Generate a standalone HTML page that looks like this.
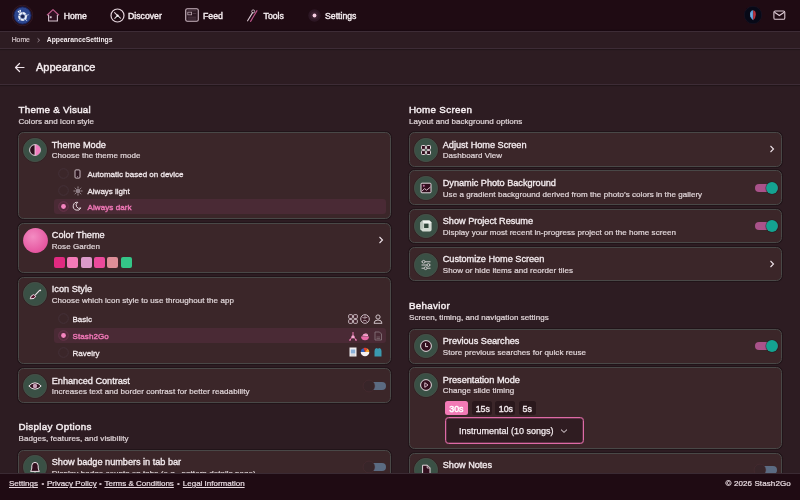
<!DOCTYPE html>
<html><head><meta charset="utf-8"><title>Appearance Settings</title>
<style>
html,body{margin:0;padding:0;width:800px;height:500px;overflow:hidden;background:#2d1c22;}
body{position:relative;font-family:"Liberation Sans",sans-serif;}
#w{position:absolute;left:0;top:0;width:800px;height:500px;will-change:transform;background:#2d1c22;}
.t{position:absolute;white-space:nowrap;}
.b{position:absolute;display:block;}
</style></head><body><div id="w">
<div class="b" style="left:0px;top:0px;width:800px;height:31px;background:#1f0b13"></div>
<div class="b" style="left:0px;top:28.5px;width:800px;height:2px;background:linear-gradient(#1f0b13,#170810)"></div>
<div class="b" style="left:0px;top:30.6px;width:800px;height:1px;background:#3d2c36"></div>
<svg class="b" style="left:12px;top:5px" width="21" height="21" viewBox="0 0 21 21"><circle cx="10.5" cy="10.5" r="10.3" fill="#221019" stroke="#3c1e28" stroke-width="0.7"/><circle cx="10.5" cy="10.5" r="8.6" fill="#2c4790" stroke="#1a2460" stroke-width="0.9"/><circle cx="10.6" cy="11.4" r="4.6" fill="#dfe6f2" opacity="0.35"/><circle cx="10.6" cy="11.4" r="3.4" fill="none" stroke="#eef2fa" stroke-width="1.8" stroke-dasharray="3.2 0.7"/><circle cx="10.6" cy="11.4" r="1.7" fill="#18224e"/><circle cx="6.6" cy="6.6" r="0.9" fill="#eef2fa"/><circle cx="8.2" cy="5.6" r="0.8" fill="#eef2fa"/><path d="M6.8 7 L8.4 8.6 M8.2 5.8 L9 7.8" stroke="#e4eaf6" stroke-width="0.8"/><path d="M14.6 10.4 L16.8 9.6 M13.6 14.2 L15 16 M7.4 14.6 L6.4 15.8" stroke="#dfe6f2" stroke-width="0.7"/></svg>
<svg class="b" style="left:46px;top:8px" width="14" height="14" viewBox="0 0 14 14"><path d="M2.2 6.6 L7 2.2 L11.8 6.6 V13 H2.2 Z" fill="#2e0f20"/><path d="M1 7.2 L7 1.6 L13 7.2" fill="none" stroke="#c05a8c" stroke-width="1.2" stroke-linejoin="round"/><path d="M2.6 6.8 V13 H11.4 V6.8" fill="none" stroke="#d6c4ce" stroke-width="1.1"/><rect x="3.8" y="8.3" width="1.9" height="1.9" fill="#d6c4ce"/></svg>
<div class="t" style="left:63.7px;top:12.34px;font-size:8.7px;line-height:8.7px;font-weight:400;color:#f4ecef;-webkit-text-stroke:0.4px #f4ecef;">Home</div>
<svg class="b" style="left:109.6px;top:7.8px" width="15" height="15" viewBox="0 0 15 15"><circle cx="7.5" cy="7.5" r="6.5" fill="none" stroke="#e4d4dc" stroke-width="1.2"/><path d="M4.6 4.6 L7.6 7.6 M4.8 10.4 L7.6 7.6 L10.4 10.2" stroke="#e4d4dc" stroke-width="1.1" stroke-linecap="round"/><circle cx="7.6" cy="7.6" r="1.1" fill="#fff"/></svg>
<div class="t" style="left:128px;top:12.34px;font-size:8.7px;line-height:8.7px;font-weight:400;color:#f4ecef;-webkit-text-stroke:0.4px #f4ecef;">Discover</div>
<svg class="b" style="left:185px;top:8.1px" width="14" height="14" viewBox="0 0 14 14"><rect x="0.7" y="0.7" width="12.6" height="12.6" rx="1.6" fill="#2c1722" stroke="#cbb7c1" stroke-width="1.1"/><rect x="2.8" y="4.2" width="3.8" height="2.6" fill="none" stroke="#b8a4ae" stroke-width="0.8"/><path d="M2.8 2.8 H11.2 M7.6 5.5 H11.2 M2.8 9.2 H11.2 M2.8 11 H11.2" stroke="#5a4450" stroke-width="0.7"/></svg>
<div class="t" style="left:203px;top:12.34px;font-size:8.7px;line-height:8.7px;font-weight:400;color:#f4ecef;-webkit-text-stroke:0.4px #f4ecef;">Feed</div>
<svg class="b" style="left:246px;top:8px" width="14" height="15" viewBox="0 0 14 15"><path d="M1.6 12.8 L6.6 4.6" stroke="#dccad4" stroke-width="1.1" stroke-linecap="round"/><circle cx="7.2" cy="3.4" r="1.5" fill="none" stroke="#cdbcc5" stroke-width="0.9"/><path d="M4.6 13.4 L11 2.6" stroke="#c2568c" stroke-width="1.1" stroke-linecap="round"/></svg>
<div class="t" style="left:263.6px;top:12.34px;font-size:8.7px;line-height:8.7px;font-weight:400;color:#f4ecef;-webkit-text-stroke:0.4px #f4ecef;">Tools</div>
<svg class="b" style="left:306.5px;top:7.9px" width="15" height="15" viewBox="0 0 15 15"><circle cx="7.5" cy="7.5" r="6.2" fill="#301a28" opacity="0.85"/><circle cx="7.5" cy="7.5" r="4" fill="#3a2030"/><circle cx="7.5" cy="7.5" r="1.9" fill="#f6cde2"/></svg>
<div class="t" style="left:325px;top:12.34px;font-size:8.7px;line-height:8.7px;font-weight:400;color:#f4ecef;-webkit-text-stroke:0.4px #f4ecef;">Settings</div>
<svg class="b" style="left:744px;top:6px" width="18" height="18" viewBox="0 0 18 18"><circle cx="9" cy="9" r="8.7" fill="#070917" stroke="#1c1a2a" stroke-width="0.5"/><path d="M9.2 4.2 Q6 4.4 6 8.6 Q6.2 12.4 9.2 14.2 Z" fill="#5a9ad2"/><path d="M9.2 4.2 Q12 4.6 11.8 8.8 Q11.6 12.6 9.2 14.2 Z" fill="#b8303c"/><path d="M7 6.5 Q7.5 9 7 11" stroke="#9ccaf0" stroke-width="0.6" fill="none"/></svg>
<svg class="b" style="left:773.4px;top:10.4px" width="13" height="10" viewBox="0 0 13 10"><rect x="0.9" y="0.9" width="10.9" height="8.4" rx="1.4" fill="none" stroke="#e2cfd9" stroke-width="1.05"/><path d="M1.5 2.3 L6.35 5.5 L11.2 2.3" fill="none" stroke="#e2cfd9" stroke-width="1.05"/></svg>
<div class="b" style="left:0px;top:31.6px;width:800px;height:16.5px;background:#2d1c22"></div>
<div class="b" style="left:0px;top:48px;width:800px;height:1px;background:#3d2c36;box-shadow:0 1px 1px rgba(0,0,0,0.3)"></div>
<div class="t" style="left:11.7px;top:37.24px;font-size:6.8px;line-height:6.8px;font-weight:400;color:#d3c5ca;-webkit-text-stroke:0.2px #d3c5ca;">Home</div>
<svg class="b" style="left:35.5px;top:37px" width="5" height="6" viewBox="0 0 5 6"><path d="M1.6 1.4 L3.6 3.2 L1.6 5" fill="none" stroke="#a696a0" stroke-width="0.9"/></svg>
<div class="t" style="left:46.8px;top:37.24px;font-size:6.8px;line-height:6.8px;font-weight:700;color:#f4ecef;">AppearanceSettings</div>
<div class="b" style="left:0px;top:84px;width:800px;height:1px;background:#3d2c36;box-shadow:0 1px 1px rgba(0,0,0,0.3)"></div>
<svg class="b" style="left:14px;top:62px" width="11" height="11" viewBox="0 0 11 11"><path d="M10 5.5 H1.5 M5.5 1.5 L1.5 5.5 L5.5 9.5" fill="none" stroke="#f0e4ea" stroke-width="1.2" stroke-linecap="round" stroke-linejoin="round"/></svg>
<div class="t" style="left:36px;top:62.19px;font-size:11px;line-height:11px;font-weight:400;color:#f4ecef;-webkit-text-stroke:0.4px #f4ecef;">Appearance</div>
<div class="t" style="left:18.5px;top:104.60px;font-size:9.8px;line-height:9.8px;font-weight:400;color:#f4ecef;-webkit-text-stroke:0.45px #f4ecef;letter-spacing:0.25px">Theme &amp; Visual</div>
<div class="t" style="left:18.5px;top:118.23px;font-size:8px;line-height:8px;font-weight:400;color:#e0d5d8;-webkit-text-stroke:0.2px #e0d5d8;letter-spacing:0.06px">Colors and icon style</div>
<div class="b" style="left:17.75px;top:132px;width:373.25px;height:87px;background:#3b2629;border:1px solid #494847;border-radius:5.5px;box-sizing:border-box;box-shadow:0 0 0.5px 1px rgba(22,12,15,0.5)"></div>
<svg class="b" style="left:21.75px;top:136.75px" width="26" height="26" viewBox="0 0 26 26"><g transform="translate(1 1)"><circle cx="12.0" cy="12.0" r="12.3" fill="none" stroke="rgba(22,18,18,0.45)" stroke-width="0.8"/><circle cx="12.0" cy="12.0" r="11.7" fill="#3a5045" stroke="#4a534b" stroke-width="0.7"/><circle cx="12" cy="12" r="5.4" fill="#2a0f1c" stroke="#ece0e6" stroke-width="0.9"/><path d="M12 6.6 A5.4 5.4 0 0 1 12 17.4 Z" fill="#f07ec0"/><path d="M12 6.6 V17.4" stroke="#ece0e6" stroke-width="0.8"/></g></svg>
<div class="t" style="left:51.75px;top:140.61px;font-size:9.2px;line-height:9.2px;font-weight:400;color:#f4ecef;-webkit-text-stroke:0.32px #f4ecef;">Theme Mode</div>
<div class="t" style="left:51.75px;top:152.33px;font-size:8px;line-height:8px;font-weight:400;color:#e0d5d8;-webkit-text-stroke:0.2px #e0d5d8;letter-spacing:0.06px">Choose the theme mode</div>
<div class="b" style="left:53.75px;top:198.75px;width:332px;height:15.5px;background:#4a2a35;border-radius:3px"></div>
<svg class="b" style="left:58.0px;top:168.1px" width="11" height="11" viewBox="0 0 11 11"><circle cx="5.5" cy="5.5" r="4.8" fill="none" stroke="#45323a" stroke-width="0.9"/></svg>
<svg class="b" style="left:58.0px;top:184.8px" width="11" height="11" viewBox="0 0 11 11"><circle cx="5.5" cy="5.5" r="4.8" fill="none" stroke="#45323a" stroke-width="0.9"/></svg>
<svg class="b" style="left:58.0px;top:200.7px" width="11" height="11" viewBox="0 0 11 11"><circle cx="5.5" cy="5.5" r="4.8" fill="#52283a" stroke="#6e3a52" stroke-width="0.8"/><circle cx="5.5" cy="5.5" r="2.4" fill="#f584c0"/></svg>
<svg class="b" style="left:74px;top:168.5px" width="7" height="10" viewBox="0 0 7 10"><rect x="1" y="0.9" width="5" height="8.2" rx="1" fill="#2e1620" stroke="#d8c8d0" stroke-width="0.9"/><path d="M3 7.6 H4" stroke="#d8c8d0" stroke-width="0.6"/></svg>
<div class="t" style="left:87.5px;top:171.03px;font-size:8px;line-height:8px;font-weight:400;color:#efe6e9;-webkit-text-stroke:0.3px #efe6e9;">Automatic based on device</div>
<svg class="b" style="left:72.5px;top:185.5px" width="10" height="10" viewBox="0 0 10 10"><circle cx="5" cy="5" r="2.1" fill="#8c7c84" stroke="#a8989f" stroke-width="0.6"/><path d="M5 0.5V2 M5 8V9.5 M0.5 5H2 M8 5H9.5 M1.8 1.8L2.8 2.8 M7.2 7.2L8.2 8.2 M1.8 8.2L2.8 7.2 M7.2 2.8L8.2 1.8" stroke="#b8a8b0" stroke-width="0.8"/></svg>
<div class="t" style="left:87.5px;top:187.78px;font-size:8px;line-height:8px;font-weight:400;color:#efe6e9;-webkit-text-stroke:0.3px #efe6e9;">Always light</div>
<svg class="b" style="left:72.3px;top:201.2px" width="10" height="10" viewBox="0 0 10 10"><path d="M5.8 1.3 A4 4 0 1 0 8.9 6.9 A3.2 3.2 0 0 1 5.8 1.3 Z" fill="none" stroke="#ece2e6" stroke-width="0.95"/></svg>
<div class="t" style="left:87.5px;top:203.53px;font-size:8px;line-height:8px;font-weight:400;color:#ea74b2;-webkit-text-stroke:0.45px #ea74b2;letter-spacing:0.1px">Always dark</div>
<div class="b" style="left:17.75px;top:222.5px;width:373.25px;height:50.5px;background:#3b2629;border:1px solid #494847;border-radius:5.5px;box-sizing:border-box;box-shadow:0 0 0.5px 1px rgba(22,12,15,0.5)"></div>
<svg class="b" style="left:22.5px;top:227.5px" width="25" height="25" viewBox="0 0 25 25"><defs><radialGradient id="gp" cx="0.4" cy="0.35" r="0.7"><stop offset="0" stop-color="#f38cc2"/><stop offset="1" stop-color="#e4509c"/></radialGradient></defs><circle cx="12.5" cy="12.5" r="12.4" fill="url(#gp)"/></svg>
<div class="t" style="left:51.75px;top:230.76px;font-size:9.2px;line-height:9.2px;font-weight:400;color:#f4ecef;-webkit-text-stroke:0.32px #f4ecef;">Color Theme</div>
<div class="t" style="left:51.75px;top:242.78px;font-size:8px;line-height:8px;font-weight:400;color:#e0d5d8;-webkit-text-stroke:0.2px #e0d5d8;letter-spacing:0.06px">Rose Garden</div>
<div class="b" style="left:54.0px;top:256.5px;width:11px;height:11px;background:#e02a80;border-radius:2px"></div>
<div class="b" style="left:67.3px;top:256.5px;width:11px;height:11px;background:#f47ab8;border-radius:2px"></div>
<div class="b" style="left:80.6px;top:256.5px;width:11px;height:11px;background:#dc9bca;border-radius:2px"></div>
<div class="b" style="left:93.9px;top:256.5px;width:11px;height:11px;background:#ec4a9c;border-radius:2px"></div>
<div class="b" style="left:107.2px;top:256.5px;width:11px;height:11px;background:#de8e98;border-radius:2px"></div>
<div class="b" style="left:120.5px;top:256.5px;width:11px;height:11px;background:#34c587;border-radius:2px"></div>
<svg class="b" style="left:378px;top:236px" width="6" height="8" viewBox="0 0 6 8"><path d="M1.5 1 L4.5 4 L1.5 7" fill="none" stroke="#eee2e8" stroke-width="1.1"/></svg>
<div class="b" style="left:17.75px;top:276.5px;width:373.25px;height:87.5px;background:#3b2629;border:1px solid #494847;border-radius:5.5px;box-sizing:border-box;box-shadow:0 0 0.5px 1px rgba(22,12,15,0.5)"></div>
<svg class="b" style="left:21.75px;top:281.25px" width="26" height="26" viewBox="0 0 26 26"><g transform="translate(1 1)"><circle cx="12.0" cy="12.0" r="12.3" fill="none" stroke="rgba(22,18,18,0.45)" stroke-width="0.8"/><circle cx="12.0" cy="12.0" r="11.7" fill="#3a5045" stroke="#4a534b" stroke-width="0.7"/><path d="M12.6 12.6 L16.6 8.4 Q17.4 7.6 17.6 8.6" fill="none" stroke="#ece0e6" stroke-width="1.1" stroke-linecap="round"/><path d="M7.2 16.8 Q7.6 13.2 10.6 12.6 L12.8 14.2 Q12 17.4 7.2 16.8 Z" fill="#5a1530" stroke="#ece0e6" stroke-width="1"/></g></svg>
<div class="t" style="left:51.75px;top:285.01px;font-size:9.2px;line-height:9.2px;font-weight:400;color:#f4ecef;-webkit-text-stroke:0.32px #f4ecef;">Icon Style</div>
<div class="t" style="left:51.75px;top:296.53px;font-size:8px;line-height:8px;font-weight:400;color:#e0d5d8;-webkit-text-stroke:0.2px #e0d5d8;letter-spacing:0.06px">Choose which icon style to use throughout the app</div>
<div class="b" style="left:53.75px;top:328px;width:332px;height:14.75px;background:#4a2a35;border-radius:3px"></div>
<svg class="b" style="left:58.0px;top:312.9px" width="11" height="11" viewBox="0 0 11 11"><circle cx="5.5" cy="5.5" r="4.8" fill="none" stroke="#45323a" stroke-width="0.9"/></svg>
<svg class="b" style="left:58.0px;top:329.7px" width="11" height="11" viewBox="0 0 11 11"><circle cx="5.5" cy="5.5" r="4.8" fill="#52283a" stroke="#6e3a52" stroke-width="0.8"/><circle cx="5.5" cy="5.5" r="2.4" fill="#f584c0"/></svg>
<svg class="b" style="left:58.0px;top:346.7px" width="11" height="11" viewBox="0 0 11 11"><circle cx="5.5" cy="5.5" r="4.8" fill="none" stroke="#45323a" stroke-width="0.9"/></svg>
<div class="t" style="left:72.5px;top:315.78px;font-size:8px;line-height:8px;font-weight:400;color:#efe6e9;-webkit-text-stroke:0.3px #efe6e9;">Basic</div>
<div class="t" style="left:72.5px;top:332.53px;font-size:8px;line-height:8px;font-weight:400;color:#ea74b2;-webkit-text-stroke:0.45px #ea74b2;letter-spacing:0.1px">Stash2Go</div>
<div class="t" style="left:72.5px;top:349.53px;font-size:8px;line-height:8px;font-weight:400;color:#efe6e9;-webkit-text-stroke:0.3px #efe6e9;">Ravelry</div>
<svg class="b" style="left:347.5px;top:314px" width="10" height="10" viewBox="0 0 10 10"><rect x="0.7" y="0.7" width="3.7" height="3.7" rx="0.7" fill="#3a1a24" stroke="#e0d2d8" stroke-width="0.9"/><rect x="5.6" y="0.7" width="3.7" height="3.7" rx="0.7" fill="#3a1a24" stroke="#e0d2d8" stroke-width="0.9"/><rect x="0.7" y="5.6" width="3.7" height="3.7" rx="0.7" fill="#3a1a24" stroke="#e0d2d8" stroke-width="0.9"/><rect x="5.6" y="5.6" width="3.7" height="3.7" rx="0.7" fill="#3a1a24" stroke="#e0d2d8" stroke-width="0.9"/></svg>
<svg class="b" style="left:360px;top:314px" width="10" height="10" viewBox="0 0 10 10"><circle cx="5" cy="5" r="4.3" fill="#3a1a24" stroke="#e0d2d8" stroke-width="0.9"/><path d="M2.5 3.5 Q5 5 7.5 3 M3 7 Q5 5 7 7.5 M5 1.5 V4" fill="none" stroke="#e0d2d8" stroke-width="0.7"/></svg>
<svg class="b" style="left:372.5px;top:314px" width="10" height="10" viewBox="0 0 10 10"><circle cx="5" cy="3" r="2.1" fill="none" stroke="#e0d2d8" stroke-width="0.9"/><path d="M1 9.3 Q1 6 5 6 Q9 6 9 9.3 Z" fill="none" stroke="#e0d2d8" stroke-width="0.9"/></svg>
<svg class="b" style="left:347.5px;top:330.5px" width="10" height="10" viewBox="0 0 10 10"><path d="M5 1 V4 M2 9.2 L5 4.5 L8 9.2 M1 9 H3 M7 9 H9" stroke="#f07ab6" stroke-width="1" fill="none"/><circle cx="5" cy="5.8" r="1.6" fill="#f5a8d0"/></svg>
<svg class="b" style="left:360px;top:330.5px" width="10" height="10" viewBox="0 0 10 10"><path d="M1 5.5 H9 Q9 9.2 5 9.2 Q1 9.2 1 5.5 Z" fill="#e86aa8"/><path d="M2.2 5.2 Q3 2 6 2.5 Q8.5 3 8 5.2 Z" fill="#f6b6d6"/><path d="M3 4.5 L7 3.5" stroke="#e0509a" stroke-width="0.6"/></svg>
<svg class="b" style="left:372.5px;top:330.5px" width="10" height="10" viewBox="0 0 10 10"><path d="M2 1 H6.5 L8.5 3 V9 H2 Z" fill="none" stroke="#8a7a80" stroke-width="0.8"/><path d="M3.5 6 H7 M3.5 7.5 H7" stroke="#8a7a80" stroke-width="0.6"/></svg>
<svg class="b" style="left:347.5px;top:347px" width="10" height="10" viewBox="0 0 10 10"><rect x="1.5" y="0.5" width="7" height="9" fill="#f0eef2"/><rect x="2.8" y="2.5" width="4.4" height="4" fill="#8ab0d8"/><path d="M2.8 8 H7" stroke="#999" stroke-width="0.5"/></svg>
<svg class="b" style="left:360px;top:347px" width="10" height="10" viewBox="0 0 10 10"><path d="M0.7 5 H9.3 A4.3 4.3 0 0 1 0.7 5 Z" fill="#f4f0f2"/><path d="M0.7 5 A4.3 4.3 0 0 1 3.5 1 L5 5 Z" fill="#3060c0"/><path d="M3.5 1 A4.3 4.3 0 0 1 7.5 1.5 L5 5 Z" fill="#e04030"/><path d="M7.5 1.5 A4.3 4.3 0 0 1 9.3 5 H5 Z" fill="#f0a030"/></svg>
<svg class="b" style="left:372.5px;top:347px" width="10" height="10" viewBox="0 0 10 10"><path d="M1.5 9.5 V4 Q1.5 1.5 3.5 1 Q5 2 6.5 1 Q8.5 1.5 8.5 4 V9.5 Z" fill="#3a9ab0"/></svg>
<div class="b" style="left:17.75px;top:368px;width:373.25px;height:35px;background:#3b2629;border:1px solid #494847;border-radius:5.5px;box-sizing:border-box;box-shadow:0 0 0.5px 1px rgba(22,12,15,0.5)"></div>
<svg class="b" style="left:21.75px;top:372.75px" width="26" height="26" viewBox="0 0 26 26"><g transform="translate(1 1)"><circle cx="12.0" cy="12.0" r="12.3" fill="none" stroke="rgba(22,18,18,0.45)" stroke-width="0.8"/><circle cx="12.0" cy="12.0" r="11.7" fill="#3a5045" stroke="#4a534b" stroke-width="0.7"/><path d="M5.8 12 Q12 5.6 18.2 12 Q12 18.4 5.8 12 Z" fill="#320f1e" stroke="#ece0e6" stroke-width="1"/><circle cx="12" cy="12" r="2.2" fill="#c8a0b8"/></g></svg>
<div class="t" style="left:51.75px;top:376.71px;font-size:9.2px;line-height:9.2px;font-weight:400;color:#f4ecef;-webkit-text-stroke:0.32px #f4ecef;letter-spacing:-0.03px">Enhanced Contrast</div>
<div class="t" style="left:51.75px;top:388.33px;font-size:8px;line-height:8px;font-weight:400;color:#e0d5d8;-webkit-text-stroke:0.2px #e0d5d8;letter-spacing:0.06px">Increases text and border contrast for better readability</div>
<div class="b" style="left:363.75px;top:381.5px;width:22.5px;height:8px;background:#5b6b82;border-radius:4px"></div>
<svg class="b" style="left:362.25px;top:378.5px" width="14" height="14" viewBox="0 0 14 14"><circle cx="7" cy="7" r="5.9" fill="#382529" stroke="rgba(95,52,62,0.45)" stroke-width="0.6"/></svg>
<div class="t" style="left:18.5px;top:422.45px;font-size:9.8px;line-height:9.8px;font-weight:400;color:#f4ecef;-webkit-text-stroke:0.45px #f4ecef;letter-spacing:0.3px">Display Options</div>
<div class="t" style="left:18.5px;top:435.28px;font-size:8px;line-height:8px;font-weight:400;color:#e0d5d8;-webkit-text-stroke:0.2px #e0d5d8;letter-spacing:0.06px">Badges, features, and visibility</div>
<div class="b" style="left:17.75px;top:450px;width:373.25px;height:45px;background:#3b2629;border:1px solid #494847;border-radius:5.5px;box-sizing:border-box;box-shadow:0 0 0.5px 1px rgba(22,12,15,0.5)"></div>
<svg class="b" style="left:21.75px;top:454.25px" width="26" height="26" viewBox="0 0 26 26"><g transform="translate(1 1)"><circle cx="12.0" cy="12.0" r="12.3" fill="none" stroke="rgba(22,18,18,0.45)" stroke-width="0.8"/><circle cx="12.0" cy="12.0" r="11.7" fill="#3a5045" stroke="#4a534b" stroke-width="0.7"/><path d="M7.6 16.4 Q8.6 15 8.8 13 V10.8 Q8.8 7.4 12 7.4 Q15.2 7.4 15.2 10.8 V13 Q15.4 15 16.4 16.4 Z" fill="#320f1e" stroke="#ece0e6" stroke-width="1"/><path d="M11 18.2 H13" stroke="#ece0e6" stroke-width="1.1"/></g></svg>
<div class="t" style="left:51.75px;top:458.21px;font-size:9.2px;line-height:9.2px;font-weight:400;color:#f4ecef;-webkit-text-stroke:0.32px #f4ecef;letter-spacing:-0.03px">Show badge numbers in tab bar</div>
<div class="t" style="left:51.75px;top:469.83px;font-size:8px;line-height:8px;font-weight:400;color:#e0d5d8;-webkit-text-stroke:0.2px #e0d5d8;letter-spacing:0.06px">Display badge counts on tabs (e.g., pattern details page)</div>
<div class="b" style="left:363.75px;top:463px;width:22.5px;height:8px;background:#5b6b82;border-radius:4px"></div>
<svg class="b" style="left:362.25px;top:460px" width="14" height="14" viewBox="0 0 14 14"><circle cx="7" cy="7" r="5.9" fill="#382529" stroke="rgba(95,52,62,0.45)" stroke-width="0.6"/></svg>
<div class="t" style="left:409px;top:104.60px;font-size:9.8px;line-height:9.8px;font-weight:400;color:#f4ecef;-webkit-text-stroke:0.45px #f4ecef;letter-spacing:0.3px">Home Screen</div>
<div class="t" style="left:409px;top:118.28px;font-size:8px;line-height:8px;font-weight:400;color:#e0d5d8;-webkit-text-stroke:0.2px #e0d5d8;letter-spacing:0.06px">Layout and background options</div>
<div class="b" style="left:408.75px;top:132px;width:373.25px;height:35px;background:#3b2629;border:1px solid #494847;border-radius:5.5px;box-sizing:border-box;box-shadow:0 0 0.5px 1px rgba(22,12,15,0.5)"></div>
<svg class="b" style="left:412.75px;top:136.75px" width="26" height="26" viewBox="0 0 26 26"><g transform="translate(1 1)"><circle cx="12.0" cy="12.0" r="12.3" fill="none" stroke="rgba(22,18,18,0.45)" stroke-width="0.8"/><circle cx="12.0" cy="12.0" r="11.7" fill="#3a5045" stroke="#4a534b" stroke-width="0.7"/><rect x="7.5" y="7.5" width="3.9" height="3.9" rx="0.8" fill="#320f1e" stroke="#ece0e6" stroke-width="0.95"/><rect x="12.6" y="7.5" width="3.9" height="3.9" rx="0.8" fill="#320f1e" stroke="#ece0e6" stroke-width="0.95"/><rect x="7.5" y="12.6" width="3.9" height="3.9" rx="0.8" fill="#320f1e" stroke="#ece0e6" stroke-width="0.95"/><rect x="12.6" y="12.6" width="3.9" height="3.9" rx="0.8" fill="#320f1e" stroke="#ece0e6" stroke-width="0.95"/></g></svg>
<div class="t" style="left:442.75px;top:140.71px;font-size:9.2px;line-height:9.2px;font-weight:400;color:#f4ecef;-webkit-text-stroke:0.32px #f4ecef;letter-spacing:-0.03px">Adjust Home Screen</div>
<div class="t" style="left:442.75px;top:152.33px;font-size:8px;line-height:8px;font-weight:400;color:#e0d5d8;-webkit-text-stroke:0.2px #e0d5d8;letter-spacing:0.06px">Dashboard View</div>
<svg class="b" style="left:769.05px;top:145.0px" width="6" height="8" viewBox="0 0 6 8"><path d="M1.5 1 L4.5 4 L1.5 7" fill="none" stroke="#eee2e8" stroke-width="1.1"/></svg>
<div class="b" style="left:408.75px;top:170px;width:373.25px;height:35px;background:#3b2629;border:1px solid #494847;border-radius:5.5px;box-sizing:border-box;box-shadow:0 0 0.5px 1px rgba(22,12,15,0.5)"></div>
<svg class="b" style="left:412.75px;top:175.0px" width="26" height="26" viewBox="0 0 26 26"><g transform="translate(1 1)"><circle cx="12.0" cy="12.0" r="12.3" fill="none" stroke="rgba(22,18,18,0.45)" stroke-width="0.8"/><circle cx="12.0" cy="12.0" r="11.7" fill="#3a5045" stroke="#4a534b" stroke-width="0.7"/><rect x="7" y="7.2" width="10" height="9.6" rx="1" fill="#320f1e" stroke="#ece0e6" stroke-width="0.95"/><path d="M7.5 15.6 L10.5 12.6 L12.6 14.2 L16.5 11" fill="none" stroke="#e8c8d8" stroke-width="0.9"/><circle cx="9.8" cy="9.8" r="1" fill="#c070a0"/></g></svg>
<div class="t" style="left:442.75px;top:178.96px;font-size:9.2px;line-height:9.2px;font-weight:400;color:#f4ecef;-webkit-text-stroke:0.32px #f4ecef;letter-spacing:-0.03px">Dynamic Photo Background</div>
<div class="t" style="left:442.75px;top:190.58px;font-size:8px;line-height:8px;font-weight:400;color:#e0d5d8;-webkit-text-stroke:0.2px #e0d5d8;letter-spacing:0.06px">Use a gradient background derived from the photo&#8217;s colors in the gallery</div>
<div class="b" style="left:755.0px;top:183.75px;width:22.5px;height:8px;background:#a9528a;border-radius:4px"></div>
<svg class="b" style="left:764.5px;top:180.75px" width="14" height="14" viewBox="0 0 14 14"><circle cx="7" cy="7" r="6.6" fill="#1b1416" opacity="0.55"/><circle cx="7" cy="7" r="5.9" fill="#14a391"/></svg>
<div class="b" style="left:408.75px;top:208.5px;width:373.25px;height:34.5px;background:#3b2629;border:1px solid #494847;border-radius:5.5px;box-sizing:border-box;box-shadow:0 0 0.5px 1px rgba(22,12,15,0.5)"></div>
<svg class="b" style="left:412.75px;top:213.25px" width="26" height="26" viewBox="0 0 26 26"><g transform="translate(1 1)"><circle cx="12.0" cy="12.0" r="12.3" fill="none" stroke="rgba(22,18,18,0.45)" stroke-width="0.8"/><circle cx="12.0" cy="12.0" r="11.7" fill="#3a5045" stroke="#4a534b" stroke-width="0.7"/><path d="M8.6 6.4 H15.4 L17.6 8.6 V15.6 Q17.6 17.6 15.6 17.6 H8.6 L6.4 15.4 V8.6 Z" fill="#d3dbd3"/><path d="M8.6 6.4 H15.4 L17.6 8.6 L15 10 H9.6 Z" fill="#eef2ee"/><path d="M6.4 8.6 L8.6 6.4 L9.6 10 L9 14.5 L6.4 15.4 Z" fill="#b9c4bb"/><rect x="10.1" y="9.6" width="4.4" height="4.4" fill="#2f463a"/></g></svg>
<div class="t" style="left:442.75px;top:217.21px;font-size:9.2px;line-height:9.2px;font-weight:400;color:#f4ecef;-webkit-text-stroke:0.32px #f4ecef;letter-spacing:-0.03px">Show Project Resume</div>
<div class="t" style="left:442.75px;top:228.83px;font-size:8px;line-height:8px;font-weight:400;color:#e0d5d8;-webkit-text-stroke:0.2px #e0d5d8;letter-spacing:0.06px">Display your most recent in-progress project on the home screen</div>
<div class="b" style="left:755.0px;top:222px;width:22.5px;height:8px;background:#a9528a;border-radius:4px"></div>
<svg class="b" style="left:764.5px;top:219px" width="14" height="14" viewBox="0 0 14 14"><circle cx="7" cy="7" r="6.6" fill="#1b1416" opacity="0.55"/><circle cx="7" cy="7" r="5.9" fill="#14a391"/></svg>
<div class="b" style="left:408.75px;top:246.5px;width:373.25px;height:34.5px;background:#3b2629;border:1px solid #494847;border-radius:5.5px;box-sizing:border-box;box-shadow:0 0 0.5px 1px rgba(22,12,15,0.5)"></div>
<svg class="b" style="left:412.75px;top:251.5px" width="26" height="26" viewBox="0 0 26 26"><g transform="translate(1 1)"><circle cx="12.0" cy="12.0" r="12.3" fill="none" stroke="rgba(22,18,18,0.45)" stroke-width="0.8"/><circle cx="12.0" cy="12.0" r="11.7" fill="#3a5045" stroke="#4a534b" stroke-width="0.7"/><path d="M7.5 8.8 H16.5 M7.5 12 H16.5 M7.5 15.2 H16.5" stroke="#e0d8dc" stroke-width="0.9"/><circle cx="9.6" cy="8.8" r="1.4" fill="#3a5045" stroke="#e0d8dc" stroke-width="0.8"/><circle cx="14.4" cy="12" r="1.4" fill="#3a5045" stroke="#e0d8dc" stroke-width="0.8"/><circle cx="11.6" cy="15.2" r="1.4" fill="#3a5045" stroke="#e0d8dc" stroke-width="0.8"/></g></svg>
<div class="t" style="left:442.75px;top:255.46px;font-size:9.2px;line-height:9.2px;font-weight:400;color:#f4ecef;-webkit-text-stroke:0.32px #f4ecef;letter-spacing:-0.03px">Customize Home Screen</div>
<div class="t" style="left:442.75px;top:267.08px;font-size:8px;line-height:8px;font-weight:400;color:#e0d5d8;-webkit-text-stroke:0.2px #e0d5d8;letter-spacing:0.06px">Show or hide items and reorder tiles</div>
<svg class="b" style="left:769.05px;top:259.75px" width="6" height="8" viewBox="0 0 6 8"><path d="M1.5 1 L4.5 4 L1.5 7" fill="none" stroke="#eee2e8" stroke-width="1.1"/></svg>
<div class="t" style="left:409px;top:300.60px;font-size:9.8px;line-height:9.8px;font-weight:400;color:#f4ecef;-webkit-text-stroke:0.45px #f4ecef;letter-spacing:0.3px">Behavior</div>
<div class="t" style="left:409px;top:313.53px;font-size:8px;line-height:8px;font-weight:400;color:#e0d5d8;-webkit-text-stroke:0.2px #e0d5d8;letter-spacing:0.06px">Screen, timing, and navigation settings</div>
<div class="b" style="left:408.75px;top:328.5px;width:373.25px;height:35px;background:#3b2629;border:1px solid #494847;border-radius:5.5px;box-sizing:border-box;box-shadow:0 0 0.5px 1px rgba(22,12,15,0.5)"></div>
<svg class="b" style="left:412.75px;top:333.25px" width="26" height="26" viewBox="0 0 26 26"><g transform="translate(1 1)"><circle cx="12.0" cy="12.0" r="12.3" fill="none" stroke="rgba(22,18,18,0.45)" stroke-width="0.8"/><circle cx="12.0" cy="12.0" r="11.7" fill="#3a5045" stroke="#4a534b" stroke-width="0.7"/><circle cx="12" cy="12" r="5.4" fill="#320f1e" stroke="#ece0e6" stroke-width="0.95"/><path d="M11.6 9 V12.6 H14" fill="none" stroke="#ece0e6" stroke-width="0.95"/></g></svg>
<div class="t" style="left:442.75px;top:337.21px;font-size:9.2px;line-height:9.2px;font-weight:400;color:#f4ecef;-webkit-text-stroke:0.32px #f4ecef;letter-spacing:-0.03px">Previous Searches</div>
<div class="t" style="left:442.75px;top:348.83px;font-size:8px;line-height:8px;font-weight:400;color:#e0d5d8;-webkit-text-stroke:0.2px #e0d5d8;letter-spacing:0.06px">Store previous searches for quick reuse</div>
<div class="b" style="left:755.0px;top:342px;width:22.5px;height:8px;background:#a9528a;border-radius:4px"></div>
<svg class="b" style="left:764.5px;top:339px" width="14" height="14" viewBox="0 0 14 14"><circle cx="7" cy="7" r="6.6" fill="#1b1416" opacity="0.55"/><circle cx="7" cy="7" r="5.9" fill="#14a391"/></svg>
<div class="b" style="left:408.75px;top:366.5px;width:373.25px;height:82.5px;background:#3b2629;border:1px solid #494847;border-radius:5.5px;box-sizing:border-box;box-shadow:0 0 0.5px 1px rgba(22,12,15,0.5)"></div>
<svg class="b" style="left:412.75px;top:371.5px" width="26" height="26" viewBox="0 0 26 26"><g transform="translate(1 1)"><circle cx="12.0" cy="12.0" r="12.3" fill="none" stroke="rgba(22,18,18,0.45)" stroke-width="0.8"/><circle cx="12.0" cy="12.0" r="11.7" fill="#3a5045" stroke="#4a534b" stroke-width="0.7"/><circle cx="12" cy="12" r="5.4" fill="#320f1e" stroke="#ece0e6" stroke-width="0.95"/><path d="M10.8 9.7 L14 12 L10.8 14.3 Z" fill="none" stroke="#e8c8d8" stroke-width="0.9"/></g></svg>
<div class="t" style="left:442.75px;top:375.51px;font-size:9.2px;line-height:9.2px;font-weight:400;color:#f4ecef;-webkit-text-stroke:0.32px #f4ecef;">Presentation Mode</div>
<div class="t" style="left:442.75px;top:387.28px;font-size:8px;line-height:8px;font-weight:400;color:#e0d5d8;-webkit-text-stroke:0.2px #e0d5d8;letter-spacing:0.06px">Change slide timing</div>
<div class="b" style="left:444.75px;top:401.25px;width:23.5px;height:13.25px;background:#f27ab6;border-radius:2.5px"></div>
<div class="t" style="left:449.3px;top:404.55px;font-size:8.8px;line-height:8.8px;font-weight:400;color:#ffffff;-webkit-text-stroke:0.45px #ffffff;">30s</div>
<div class="b" style="left:472px;top:401.25px;width:19.5px;height:13.25px;background:#2a181c;border-radius:2.5px"></div>
<div class="t" style="left:475.7px;top:404.55px;font-size:8.8px;line-height:8.8px;font-weight:400;color:#efe6e9;-webkit-text-stroke:0.4px #efe6e9;">15s</div>
<div class="b" style="left:495.25px;top:401.25px;width:20px;height:13.25px;background:#2a181c;border-radius:2.5px"></div>
<div class="t" style="left:498.8px;top:404.55px;font-size:8.8px;line-height:8.8px;font-weight:400;color:#efe6e9;-webkit-text-stroke:0.4px #efe6e9;">10s</div>
<div class="b" style="left:519px;top:401.25px;width:16.75px;height:13.25px;background:#2a181c;border-radius:2.5px"></div>
<div class="t" style="left:522.5px;top:404.55px;font-size:8.8px;line-height:8.8px;font-weight:400;color:#efe6e9;-webkit-text-stroke:0.4px #efe6e9;">5s</div>
<div class="b" style="left:444.75px;top:417px;width:139.25px;height:26.5px;background:#2f1c21;border:1px solid #de6aa6;box-shadow:inset 0 0 0 0.4px rgba(222,106,166,0.6);border-radius:3.5px;box-sizing:border-box"></div>
<div class="t" style="left:459px;top:427.43px;font-size:9px;line-height:9px;font-weight:400;color:#f4ecef;-webkit-text-stroke:0.25px #f4ecef;">Instrumental (10 songs)</div>
<svg class="b" style="left:559px;top:427.5px" width="10" height="6" viewBox="0 0 10 6"><path d="M2 1.6 L5 4.4 L8 1.6" fill="none" stroke="#eee2e8" stroke-width="1"/></svg>
<div class="b" style="left:408.75px;top:452.5px;width:373.25px;height:45px;background:#3b2629;border:1px solid #494847;border-radius:5.5px;box-sizing:border-box;box-shadow:0 0 0.5px 1px rgba(22,12,15,0.5)"></div>
<svg class="b" style="left:412.75px;top:457.0px" width="26" height="26" viewBox="0 0 26 26"><g transform="translate(1 1)"><circle cx="12.0" cy="12.0" r="12.3" fill="none" stroke="rgba(22,18,18,0.45)" stroke-width="0.8"/><circle cx="12.0" cy="12.0" r="11.7" fill="#3a5045" stroke="#4a534b" stroke-width="0.7"/><path d="M8.6 7.2 H13.4 L16 9.8 V17.6 H8.6 Z" fill="#320f1e" stroke="#ece0e6" stroke-width="0.95"/><path d="M13.2 7.4 V10 H15.8" fill="none" stroke="#ece0e6" stroke-width="0.8"/></g></svg>
<div class="t" style="left:442.75px;top:460.96px;font-size:9.2px;line-height:9.2px;font-weight:400;color:#f4ecef;-webkit-text-stroke:0.32px #f4ecef;letter-spacing:-0.03px">Show Notes</div>
<div class="t" style="left:442.75px;top:472.58px;font-size:8px;line-height:8px;font-weight:400;color:#e0d5d8;-webkit-text-stroke:0.2px #e0d5d8;letter-spacing:0.06px">Display notes alongside the presentation slides</div>
<div class="b" style="left:754.75px;top:465.75px;width:22.5px;height:8px;background:#5b6b82;border-radius:4px"></div>
<svg class="b" style="left:753.25px;top:462.75px" width="14" height="14" viewBox="0 0 14 14"><circle cx="7" cy="7" r="5.9" fill="#382529" stroke="rgba(95,52,62,0.45)" stroke-width="0.6"/></svg>
<div class="b" style="left:0px;top:473.5px;width:800px;height:26.5px;background:#1f0b13"></div>
<div class="b" style="left:0px;top:473px;width:800px;height:1px;background:#3a2a33"></div>
<div class="t" style="left:9px;top:480.03px;font-size:8px;line-height:8px;font-weight:400;color:#e8dbe1;-webkit-text-stroke:0.2px #e8dbe1;text-decoration:underline;text-underline-offset:1.2px;text-decoration-thickness:0.6px">Settings</div>
<div class="t" style="left:41.5px;top:480.03px;font-size:8px;line-height:8px;font-weight:400;color:#cbbac2;-webkit-text-stroke:0.2px #cbbac2;">&#8226;</div>
<div class="t" style="left:46.9px;top:480.03px;font-size:8px;line-height:8px;font-weight:400;color:#e8dbe1;-webkit-text-stroke:0.2px #e8dbe1;text-decoration:underline;text-underline-offset:1.2px;text-decoration-thickness:0.6px">Privacy Policy</div>
<div class="t" style="left:99px;top:480.03px;font-size:8px;line-height:8px;font-weight:400;color:#cbbac2;-webkit-text-stroke:0.2px #cbbac2;">&#8226;</div>
<div class="t" style="left:104.5px;top:480.03px;font-size:8px;line-height:8px;font-weight:400;color:#e8dbe1;-webkit-text-stroke:0.2px #e8dbe1;text-decoration:underline;text-underline-offset:1.2px;text-decoration-thickness:0.6px">Terms &amp; Conditions</div>
<div class="t" style="left:177px;top:480.03px;font-size:8px;line-height:8px;font-weight:400;color:#cbbac2;-webkit-text-stroke:0.2px #cbbac2;">&#8226;</div>
<div class="t" style="left:182.8px;top:480.03px;font-size:8px;line-height:8px;font-weight:400;color:#e8dbe1;-webkit-text-stroke:0.2px #e8dbe1;text-decoration:underline;text-underline-offset:1.2px;text-decoration-thickness:0.6px">Legal Information</div>
<div class="t" style="left:725.6px;top:480.03px;font-size:8px;line-height:8px;font-weight:400;color:#e8dbe1;-webkit-text-stroke:0.2px #e8dbe1;letter-spacing:0.1px">&#169; 2026 Stash2Go</div>
</div></body></html>
